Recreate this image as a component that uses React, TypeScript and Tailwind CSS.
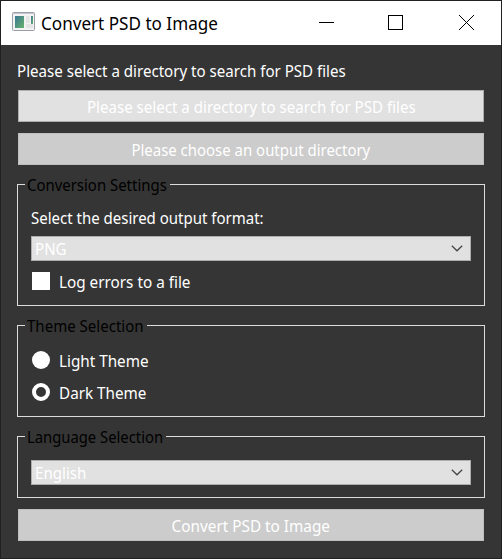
import type { ReactNode } from "react";

function Text({ children, className = "origin-left scale-x-[.943]" }: { children: ReactNode; className?: string }) {
  return <span className={`inline-block whitespace-nowrap ${className}`}>{children}</span>;
}

function Button({ children, primary = false, textClass = "scale-x-[.943]" }: { children: ReactNode; primary?: boolean; textClass?: string }) {
  return (
    <button
      className={`mx-px flex h-8 shrink-0 items-center justify-center border pt-px ${
        primary ? "border-[#adadad] bg-[#e1e1e1]" : "border-[#bfbfbf] bg-[#cccccc]"
      }`}
    >
      <Text className={textClass}>{children}</Text>
    </button>
  );
}

function Group({ title, titleWidth, titleScale, className, children }: { title: string; titleWidth: string; titleScale: string; className: string; children: ReactNode }) {
  return (
    <fieldset className={`min-w-0 border border-[#dcdcdc] pl-[7px] ${className}`}>
      <legend className={`h-[23px] pl-0.5 leading-[25px] text-black ${titleWidth}`}>
        <Text className={`origin-left ${titleScale}`}>{title}</Text>
      </legend>
      <div className="flex flex-col pr-[13px] pl-1.5">{children}</div>
    </fieldset>
  );
}

function Combo({ value }: { value: string }) {
  return (
    <div className="flex h-[25px] items-center justify-between border border-[#adadad] bg-[#e1e1e1] pr-[7px] pl-[3px]">
      <Text>{value}</Text>
      <svg width="12" height="7" viewBox="0 0 12 7" fill="none" stroke="#444" strokeWidth="1.2">
        <path d="M.8.8 6 5.8 11.2.8" />
      </svg>
    </div>
  );
}

function Radio({ label, checked = false }: { label: string; checked?: boolean }) {
  return (
    <div className="flex h-[18px] items-center gap-[9px] pl-px">
      <span className={`size-[18px] rounded-full ${checked ? "border-4 border-white" : "bg-white"}`} />
      <span className="pt-0.5">
        <Text className="origin-left scale-x-[.953]">{label}</Text>
      </span>
    </div>
  );
}

export default function App() {
  return (
    <div className="flex h-[559px] w-[502px] flex-col border border-[#202020] bg-[#353535] font-['Noto_Sans',sans-serif] text-[16px] leading-5 text-white">
      <header className="flex h-11 shrink-0 items-start bg-white text-black">
        <svg className="mt-[11px] ml-[11px]" width="23" height="19" viewBox="0 0 23 19">
          <defs>
            <linearGradient id="screen" x1="0" y1="0" x2="1" y2="1">
              <stop offset="0" stopColor="#3c7795" />
              <stop offset="1" stopColor="#66b36c" />
            </linearGradient>
          </defs>
          <rect x=".5" y=".5" width="22" height="18" rx="1" fill="#f3f3f3" stroke="#9b9fa5" />
          <path d="M1 1.5h21" stroke="#c3c8ce" />
          <rect x="3" y="4" width="9" height="12" fill="url(#screen)" />
          <path d="M14 4h3.5v7H14zM14 12h7v4h-7z" fill="#e4e4e4" />
          <rect x="19" y="4" width="2" height="8" fill="url(#screen)" />
        </svg>
        <h1 className="mt-3 ml-[6px] h-5 text-[18px] leading-5">
          <Text className="origin-left scale-x-[.95]">Convert PSD to Image</Text>
        </h1>
        <svg className="mt-3.5 mr-[27px] ml-auto" width="155" height="15" viewBox="0 0 155 15" fill="none" stroke="black">
          <path d="M0 7.5h15" />
          <rect x="69.5" y=".5" width="14" height="14" />
          <path d="M140 0 155 15M155 0 140 15" />
        </svg>
      </header>
      <main className="flex flex-col px-4">
        <p className="mt-4 mb-[9px] h-5">
          <Text>Please select a directory to search for PSD files</Text>
        </p>
        <Button primary>Please select a directory to search for PSD files</Button>
        <div className="h-[11px]" />
        <Button textClass="scale-x-[.934]">Please choose an output directory</Button>
        <Group title="Conversion Settings" titleWidth="w-[145px]" titleScale="scale-x-[.933]" className="mt-2 h-[133px]">
          <p className="mt-3 mb-2 h-5">
            <Text className="origin-left scale-x-[.937]">Select the desired output format:</Text>
          </p>
          <Combo value="PNG" />
          <div className="mt-[11px] flex h-[18px] items-center gap-[9px] pl-px">
            <span className="size-[18px] bg-white" />
            <span className="pt-0.5">
              <Text className="origin-left scale-x-[.955]">Log errors to a file</Text>
            </span>
          </div>
        </Group>
        <Group title="Theme Selection" titleWidth="w-[122px]" titleScale="scale-x-[.94]" className="mt-2 h-[103px]">
          <div className="mt-3.5 flex flex-col gap-3.5">
            <Radio label="Light Theme" />
            <Radio label="Dark Theme" checked />
          </div>
        </Group>
        <Group title="Language Selection" titleWidth="w-[141px]" titleScale="scale-x-[.925]" className="mt-2 mb-[11px] h-[73px]">
          <div className="h-3" />
          <Combo value="English" />
        </Group>
        <Button textClass="scale-x-[.957]">Convert PSD to Image</Button>
      </main>
    </div>
  );
}
